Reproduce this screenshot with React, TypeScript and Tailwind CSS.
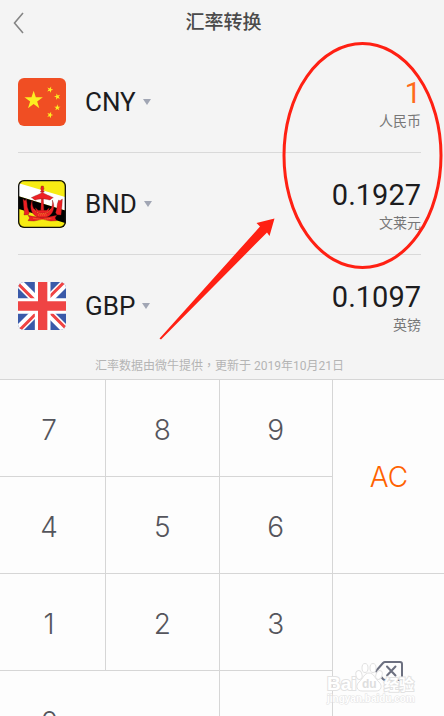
import React from 'react'

type Rate = {
  code: string
  name: string
  amount: string
  active?: boolean
  flag: React.ReactNode
}

const STAR = 'M0-10 2.25-3.09 9.51-3.09 3.63 1.18 5.88 8.09 0 3.82-5.88 8.09-3.63 1.18-9.51-3.09-2.25-3.09Z'

function ChinaFlag() {
  return (
    <svg viewBox="0 0 144 144" className="size-full" aria-hidden="true">
      <rect width="144" height="144" fill="#f04e23" />
      <g fill="#fcee21">
        <path d={STAR} transform="translate(47 67) scale(2.9)" />
        <path d={STAR} transform="translate(96 35) rotate(20)" />
        <path d={STAR} transform="translate(118 56) rotate(-15)" />
        <path d={STAR} transform="translate(118 89)" />
        <path d={STAR} transform="translate(96 111) rotate(20)" />
      </g>
    </svg>
  )
}

function BruneiFlag() {
  return (
    <svg viewBox="0 0 144 144" className="size-full" aria-hidden="true">
      <rect width="144" height="144" fill="#f7ec13" />
      <path d="M0 9 144 52V92L0 48Z" fill="#fff" />
      <path d="M0 48 144 92V130L0 86Z" fill="#000" />
      <g fill="#ed2024" stroke="#7a1712" strokeWidth="1">
        <path d="M43 60C30 88 46 114 73 114S116 88 103 60C106 82 96 98 73 98S40 82 43 60Z" />
        <path d="M70 18h6l2 8-2 5 3 5h-12l3-5-2-5Z" />
        <path d="M73 35C66 44 52 46 40 53c6 1 7 6 12 7 7-3 13-3 21-3s14 0 21 3c5-1 6-6 12-7-12-7-26-9-33-18Z" />
        <path d="M70 57h6l2 40h-10Z" />
        <path d="M52 83l8 8h26l8-8-4 16H56Z" />
        <path d="M15 57l6 5 4-5 2 12 1 12 6 17-3 6-13 1 1-8-2-18Z" />
        <path d="M133 57l-7 5-4-2-4 12-1 10-4 16 4 6 12 1 1-10 2-20Z" />
        <path d="M30 106l14 3 29 5 29-5 14-3-5 8 5 8-18 1-25-5-25 5-18-1 5-8Z" />
      </g>
      <path d="M48 88c6 9 14 13 25 13s19-4 25-13M46 115l27 4 27-4M60 105h26" fill="none" stroke="#f9a02b" strokeWidth="2" strokeDasharray="4 2" />
      <rect x="1.5" y="1.5" width="141" height="141" rx="17" fill="none" stroke="#111" strokeWidth="5" />
    </svg>
  )
}

function UkFlag() {
  return (
    <svg viewBox="0 0 144 144" className="size-full" aria-hidden="true">
      <rect width="144" height="144" fill="#3a5aa9" />
      <path d="M0 0 144 144M144 0 0 144" stroke="#fff" strokeWidth="25" />
      <g stroke="#ef4444" strokeWidth="9">
        <path d="M-4 1 60 65M148 143 84 79M140-1 76 63M4 145 68 81" />
      </g>
      <path d="M74 0V144M0 72H144" stroke="#fff" strokeWidth="47" />
      <path d="M74 0V144M0 72H144" stroke="#ef4444" strokeWidth="28" />
    </svg>
  )
}

const rates: Rate[] = [
  { code: 'CNY', name: '人民币', amount: '1', active: true, flag: <ChinaFlag /> },
  { code: 'BND', name: '文莱元', amount: '0.1927', flag: <BruneiFlag /> },
  { code: 'GBP', name: '英镑', amount: '0.1097', flag: <UkFlag /> },
]

function RateRow({ code, name, amount, active, flag }: Rate) {
  return (
    <li className="flex h-[102px] items-center justify-between border-b border-[#d9d9d9] last:border-transparent">
      <button type="button" className="flex items-center">
        <span className="size-12 overflow-hidden rounded-md">{flag}</span>
        <span className="ml-[19px] text-[26px] leading-8 text-[#1c1c1e]">{code}</span>
        <svg viewBox="0 0 8 6" className="ml-[7px] h-[6px] w-2" aria-hidden="true">
          <path d="M0 0H8L4 6Z" fill="#a1a6b4" />
        </svg>
      </button>
      <div className="flex flex-col items-end pt-[3px]">
        <span className={active ? 'text-[29px] leading-9 text-[#ff6a1a]' : 'text-[29px] leading-9 text-[#1c1c1e]'}>{amount}</span>
        <span className="text-sm leading-5 text-[#777]">{name}</span>
      </div>
    </li>
  )
}

function Key({ label, className = '' }: { label: string; className?: string }) {
  return (
    <button type="button" className={`border-r border-b border-[#d6d6d6] ${className}`}>
      {label}
    </button>
  )
}

function Keypad() {
  return (
    <div className="-mr-[2px] -ml-[7px] grid auto-rows-[97px] grid-cols-4 border-t border-[#d6d6d6] bg-[#fdfdfd] font-['Inter',sans-serif] text-[28px] font-light text-[#55555c]">
      <Key label="7" className="pt-1" />
      <Key label="8" className="pt-1" />
      <Key label="9" className="pt-1" />
      <Key label="AC" className="row-span-2 text-[#ff6200]" />
      <Key label="4" className="pt-1" />
      <Key label="5" className="pt-1" />
      <Key label="6" className="pt-1" />
      <Key label="1" className="pt-1" />
      <Key label="2" className="pt-1" />
      <Key label="3" className="pt-1" />
      <button type="button" aria-label="退格" className="row-span-2 flex items-center justify-center">
        <svg viewBox="0 0 28 20" className="h-5 w-7" fill="none" stroke="#6c7080" strokeWidth="2" strokeLinecap="round" strokeLinejoin="round">
          <path d="M10 1H25Q27 1 27 3V17Q27 19 25 19H10Q9 19 8 18L1 10 8 2Q9 1 10 1Z" />
          <path d="M12 5.500 20.500 14.500M20.500 5.500 12 14.500" />
        </svg>
      </button>
      <button type="button" className="col-span-2 grid grid-cols-2 place-items-center border-r border-[#d6d6d6] pt-1">0</button>
      <button type="button" aria-label="小数点" className="border-r border-[#d6d6d6]" />
    </div>
  )
}

function Watermark() {
  return (
    <svg viewBox="0 0 94 46" className="pointer-events-none absolute right-[26px] bottom-[10px] h-[46px] w-[94px]" fill="#fff" stroke="#e2e2e2" strokeWidth="1">
      <g fontFamily="'Liberation Sans', 'Noto Sans CJK SC', sans-serif" fontWeight="700" paintOrder="stroke">
        <text x="3" y="30" fontSize="19" strokeWidth="2">Bai</text>
        <text x="60" y="30" fontSize="15" strokeWidth="2">经验</text>
        <text x="3" y="42" fontSize="10" strokeWidth="1">jingyan.baidu.com</text>
      </g>
      <ellipse cx="35" cy="15" rx="3" ry="4.500" transform="rotate(-15 35 15)" />
      <ellipse cx="41" cy="8" rx="3" ry="4.500" />
      <ellipse cx="49" cy="8" rx="3" ry="4.500" />
      <ellipse cx="55" cy="15" rx="3" ry="4.500" transform="rotate(20 55 15)" />
      <path d="M45 13C40 13 39 19 35 22 31 26 33 31 38 31H52C57 31 59 26 55 22 51 19 50 13 45 13Z" />
      <text x="38" y="28" fontSize="12" fontFamily="'Liberation Sans', sans-serif" fontWeight="700" fill="#dedede" stroke="none">du</text>
    </svg>
  )
}

export default function App() {
  return (
    <div className="relative h-screen overflow-hidden bg-[#f4f4f4] font-['Roboto','Noto_Sans_CJK_SC',sans-serif]">
      {/* Header */}
      <header className="flex h-[51px] items-start justify-between pt-[7px] pr-[9px] pl-3">
        <button type="button" aria-label="返回" className="flex h-8 w-6 items-center">
          <svg viewBox="0 0 12 22" className="h-[22px] w-3" fill="none" stroke="#858585" strokeWidth="1.600">
            <path d="M11 1 2.500 11 11 21" />
          </svg>
        </button>
        <h1 className="text-[19px] leading-8 font-medium text-[#4a4a4a]">汇率转换</h1>
        <span className="w-6" />
      </header>

      {/* Currencies */}
      <ul className="pr-[23px] pl-[18px]">
        {rates.map((rate) => (
          <RateRow key={rate.code} {...rate} />
        ))}
      </ul>
      <p className="h-[22px] pr-[5px] text-center text-xs leading-4 text-[#b4b4b4]">
        汇率数据由微牛提供<span className="font-['Noto_Sans_CJK_TC',sans-serif]">，</span>更新于 2019年10月21日
      </p>

      <Keypad />

      {/* Red circle and arrow over the amounts */}
      <svg viewBox="0 0 290 350" className="pointer-events-none absolute top-0 right-0 h-[350px] w-[290px]" aria-hidden="true">
        <ellipse cx="208.500" cy="155.500" rx="78.500" ry="112" fill="none" stroke="#ff2013" strokeWidth="3" />
        <path d="M120.500 218.500 102.500 223 106 226.500 5.500 338.500 7 339.500 113 232.500 115.500 236Z" fill="#ff2013" />
      </svg>
      <Watermark />
    </div>
  )
}
